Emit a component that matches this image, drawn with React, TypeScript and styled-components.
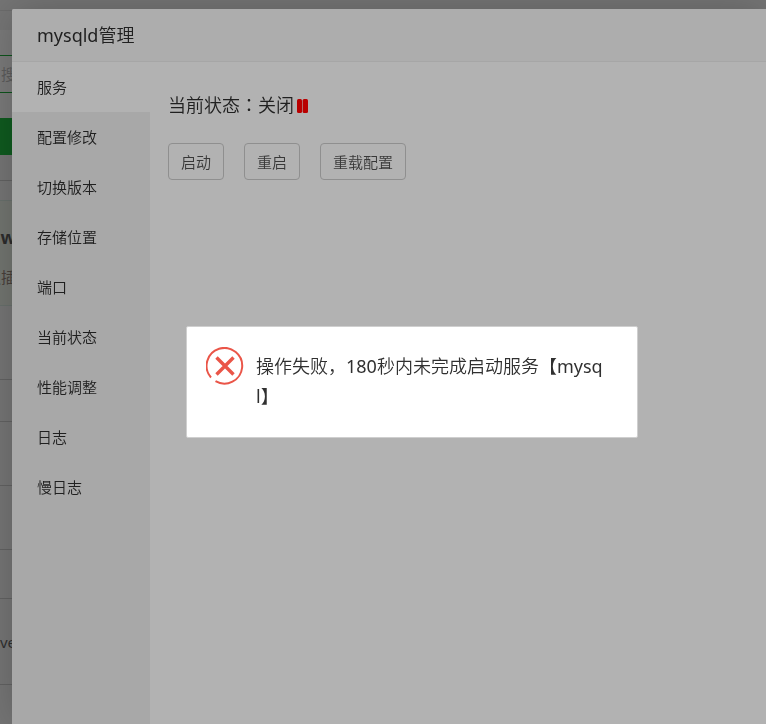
import React from "react";
import styled, { createGlobalStyle } from "styled-components";

const GlobalStyle = createGlobalStyle`
  *, *::before, *::after { box-sizing: border-box; }
  html, body, #root { height: 100%; }
  body {
    margin: 0;
    background: #757575;
    color: #202020;
    font: 15px/20px "Noto Sans", "Noto Sans CJK SC", sans-serif;
    font-weight: 350;
    overflow: hidden;
  }
`;

const Page = styled.div`
  min-height: 100%;
`;

const Backdrop = styled.div`
  width: 16px;
`;

const Band = styled.div<{ $h: number; $bg?: string; $line?: string }>`
  height: ${(p) => p.$h}px;
  background: ${(p) => p.$bg ?? "transparent"};
  border-bottom: 1px solid ${(p) => p.$line ?? "transparent"};
  display: flex;
  flex-direction: column;
  justify-content: center;
  gap: 20px;
  align-items: flex-end;
  overflow: hidden;
  white-space: nowrap;
`;

const PluginBand = styled(Band)`
  padding-top: 8px;
`;

const Faded = styled.span<{ $color: string; $bold?: boolean }>`
  color: ${(p) => p.$color};
  font-size: ${(p) => (p.$bold ? 18 : 15)}px;
  font-weight: ${(p) => (p.$bold ? 700 : 400)};
`;

const Modal = styled.section`
  position: fixed;
  inset: 9px 0 0 12px;
  display: flex;
  flex-direction: column;
  background: #b2b2b2;
  border-radius: 2px 0 0 0;
  box-shadow: 0 0 40px rgba(0, 0, 0, 0.2);
`;

const TitleBar = styled.header`
  height: 53px;
  padding: 0 25px;
  display: flex;
  align-items: center;
  background: #adadad;
  border-bottom: 1px solid #a6a6a6;
  border-radius: 2px 0 0 0;
`;

const Title = styled.h1`
  margin: 0;
  font-size: 18px;
  line-height: 24px;
  font-weight: inherit;
`;

const Latin = styled.span`
  font-weight: 400;
`;

const ModalBody = styled.div`
  flex: 1;
  display: flex;
`;

const Menu = styled.nav`
  width: 138px;
  background: #a8a8a8;
  display: flex;
  flex-direction: column;
`;

const MenuItem = styled.button<{ $active?: boolean }>`
  height: 50px;
  padding: 0 25px;
  border: 0;
  background: ${(p) => (p.$active ? "#b2b2b2" : "transparent")};
  color: inherit;
  font: inherit;
  text-align: left;
  cursor: pointer;
`;

const Content = styled.main`
  flex: 1;
  padding: 30px 18px;
`;

const Status = styled.p`
  margin: 0 0 24px;
  display: flex;
  align-items: center;
  font-size: 18px;
  line-height: 27px;
`;

const PauseIcon = styled.svg`
  width: 11px;
  height: 14px;
  margin-left: 3px;
  fill: #b90000;
`;

const Actions = styled.div`
  display: flex;
  gap: 20px;
`;

const ActionButton = styled.button`
  height: 37px;
  padding: 0 12px;
  border: 1px solid #8f8f8f;
  border-radius: 4px;
  background: transparent;
  color: #383838;
  font: inherit;
  cursor: pointer;
`;

const AlertLayer = styled.div`
  position: fixed;
  inset: 0;
  padding: 40px 0 0 58px;
  display: flex;
  align-items: center;
  justify-content: center;
  pointer-events: none;
`;

const Alert = styled.div`
  width: 452px;
  padding: 20px 33px 26px 19px;
  display: flex;
  align-items: flex-start;
  gap: 12px;
  background: #fff;
  border: 1px solid #cfcfcf;
  border-radius: 2px;
  color: #303030;
  pointer-events: auto;
`;

const ErrorIcon = styled.svg`
  flex: none;
  width: 38px;
  height: 38px;
  fill: none;
  stroke: #ea5548;
`;

const Message = styled.p`
  flex: 1;
  margin: 0;
  padding-top: 4px;
  font-size: 18px;
  line-height: 30px;
  word-break: break-all;
`;

const menuItems = [
  "服务",
  "配置修改",
  "切换版本",
  "存储位置",
  "端口",
  "当前状态",
  "性能调整",
  "日志",
  "慢日志",
];

const actions = ["启动", "重启", "重载配置"];

export default function App() {
  return (
    <Page lang="zh-CN">
      <GlobalStyle />
      <Backdrop aria-hidden="true">
        <Band $h={11} $line="#6c6c6c" />
        <Band $h={19} />
        <Band $h={26} $bg="#7a7a7a" $line="#0d541c" />
        <Band $h={37} $bg="#7a7a7a" $line="#0d541c">
          <Faded $color="#5c5c5c">搜</Faded>
        </Band>
        <Band $h={25} $bg="#7a7a7a" />
        <Band $h={37} $bg="#0f5a1f" />
        <Band $h={26} $line="#626262" />
        <Band $h={20} $line="#68706c" />
        <PluginBand $h={105} $bg="#727570" $line="#68706c">
          <Faded $color="#2c2c2c" $bold>w</Faded>
          <Faded $color="#483f3a">板插</Faded>
        </PluginBand>
        <Band $h={74} $line="#626262" />
        <Band $h={42} $line="#626262" />
        <Band $h={64} $line="#626262" />
        <Band $h={64} $line="#626262" />
        <Band $h={49} $line="#626262" />
        <Band $h={86} $line="#626262">
          <Faded $color="#303030">ve</Faded>
        </Band>
      </Backdrop>

      <Modal role="dialog" aria-labelledby="modal-title">
        <TitleBar>
          <Title id="modal-title">
            <Latin>mysqld</Latin>管理
          </Title>
        </TitleBar>
        <ModalBody>
          <Menu>
            {menuItems.map((label, i) => (
              <MenuItem key={label} type="button" $active={i === 0}>
                {label}
              </MenuItem>
            ))}
          </Menu>
          <Content>
            <Status>
              <span lang="zh-TW">当前状态：关闭</span>
              <PauseIcon viewBox="0 0 11 14" aria-hidden="true">
                <rect width="5" height="14" rx="1.5" />
                <rect x="5.6" width="5.4" height="14" rx="1.5" />
              </PauseIcon>
            </Status>
            <Actions>
              {actions.map((label) => (
                <ActionButton key={label} type="button">
                  {label}
                </ActionButton>
              ))}
            </Actions>
          </Content>
        </ModalBody>
      </Modal>

      <AlertLayer>
        <Alert role="alert">
          <ErrorIcon viewBox="0 0 38 38" aria-hidden="true">
            <path d="M5 30.5A17.8 17.8 0 1 1 9.5 34.2" strokeWidth="2" />
            <path d="M10.5 10.5L27.5 27.5M27.5 10.5L10.5 27.5" strokeWidth="3.4" />
          </ErrorIcon>
          <Message>
            操作失败，<Latin>180</Latin>秒内未完成启动服务【<Latin>mysql</Latin>】
          </Message>
        </Alert>
      </AlertLayer>
    </Page>
  );
}
